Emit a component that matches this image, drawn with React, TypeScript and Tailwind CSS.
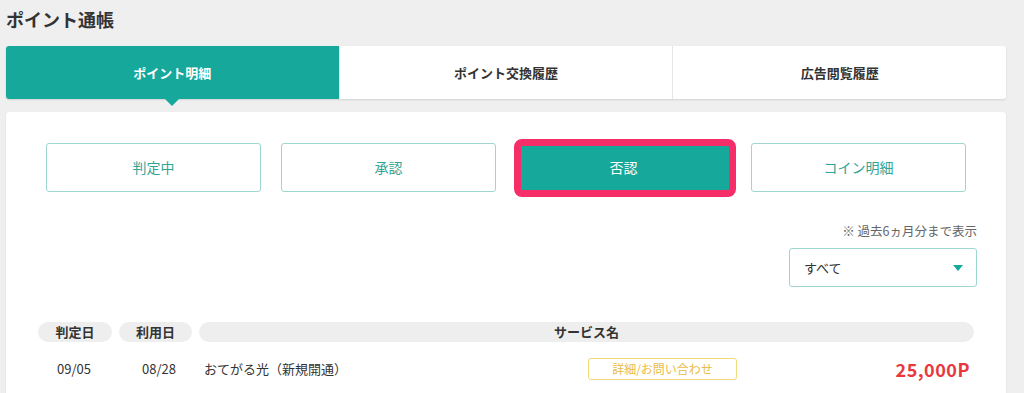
import React from 'react';

const tabs = ['ポイント明細', 'ポイント交換履歴', '広告閲覧履歴'];
const filters = ['判定中', '承認', '否認', 'コイン明細'];

export default function App() {
  return (
    <div
      className="min-h-screen w-[1024px] h-[393px] overflow-hidden bg-[#efefef] text-[#333]"
      style={{ fontFamily: '"Noto Sans CJK JP", "Noto Sans", sans-serif' }}
    >
      <div className="w-[1000px] ml-[6px] flex flex-col">
        {/* Title */}
        <h1 className="text-[18px] leading-[24px] font-bold pt-[7px] h-[46px]">ポイント通帳</h1>

        {/* Tabs */}
        <div className="flex h-[53px] bg-white rounded-[3px] shadow-[0_1px_2px_rgba(0,0,0,0.12)]">
          {tabs.map((t, i) => (
            <div
              key={t}
              className={
                i === 0
                  ? 'relative flex-1 flex items-center justify-center bg-[#15a89b] text-white text-[13px] font-bold rounded-l-[3px]'
                  : 'flex-1 flex items-center justify-center text-[13px] font-bold text-[#333] border-l border-[#e6e6e6]'
              }
            >
              {t}
              {i === 0 && (
                <span className="absolute left-1/2 -translate-x-1/2 top-full w-0 h-0 border-l-[7px] border-r-[7px] border-t-[7px] border-l-transparent border-r-transparent border-t-[#15a89b]" />
              )}
            </div>
          ))}
        </div>

        {/* Main card */}
        <div className="mt-[13px] bg-white rounded-[3px] shadow-[0_1px_2px_rgba(0,0,0,0.1)] h-[300px]">
          <div className="flex gap-[20px] px-[40px] pt-[31px]">
            {filters.map((f, i) => (
              <div key={f} className="relative flex-1">
                {i === 2 ? (
                  <>
                    <div className="h-[49px] flex items-center justify-center rounded-[3px] bg-[#15a89b] text-white text-[14px]">
                      {f}
                    </div>
                    <div className="absolute -left-[2px] -right-[5px] -top-[4px] -bottom-[5px] border-[7px] border-[#f52d69] rounded-[8px]" />
                  </>
                ) : (
                  <div className="h-[49px] flex items-center justify-center rounded-[3px] border border-[#9fd6cf] text-[#2fa597] text-[14px]">
                    {f}
                  </div>
                )}
              </div>
            ))}
          </div>

          <div className="flex flex-col items-end pr-[29px]">
            <p className="mt-[31px] text-[12.5px] leading-[16px] text-[#666]">※ 過去6ヵ月分まで表示</p>
            <div className="mt-[9px] w-[188px] h-[39px] border border-[#9fd6cf] rounded-[3px] flex items-center justify-between pl-[14px] pr-[13px] text-[13px] text-[#333]">
              <span>すべて</span>
              <span className="w-0 h-0 border-l-[5px] border-r-[5px] border-t-[6px] border-l-transparent border-r-transparent border-t-[#15a89b]" />
            </div>
          </div>

          {/* Table */}
          <div className="px-[32px] mt-[35px]">
            <div className="flex gap-[7px] text-[13px] font-bold text-[#333]">
              <div className="w-[74px] h-[20px] leading-[20px] rounded-full bg-[#eeeeee] text-center">判定日</div>
              <div className="w-[73px] h-[20px] leading-[20px] rounded-full bg-[#eeeeee] text-center">利用日</div>
              <div className="flex-1 h-[20px] leading-[20px] rounded-full bg-[#eeeeee] text-center">サービス名</div>
            </div>
            <div className="flex items-center h-[54px] text-[13px] text-[#333]">
              <span className="w-[87px] pl-[19px]">09/05</span>
              <span className="w-[79px] pl-[17px]">08/28</span>
              <span className="flex-1">おてがる光（新規開通）</span>
              <span className="w-[149px] h-[22px] flex items-center justify-center border border-[#f1da7a] rounded-[3px] text-[12px] text-[#ebbb45]">
                詳細/お問い合わせ
              </span>
              <span className="w-[237px] pr-[4px] text-right text-[18px] font-bold tracking-[0.5px] text-[#e8383d]">25,000P</span>
            </div>
          </div>
        </div>
      </div>
    </div>
  );
}
